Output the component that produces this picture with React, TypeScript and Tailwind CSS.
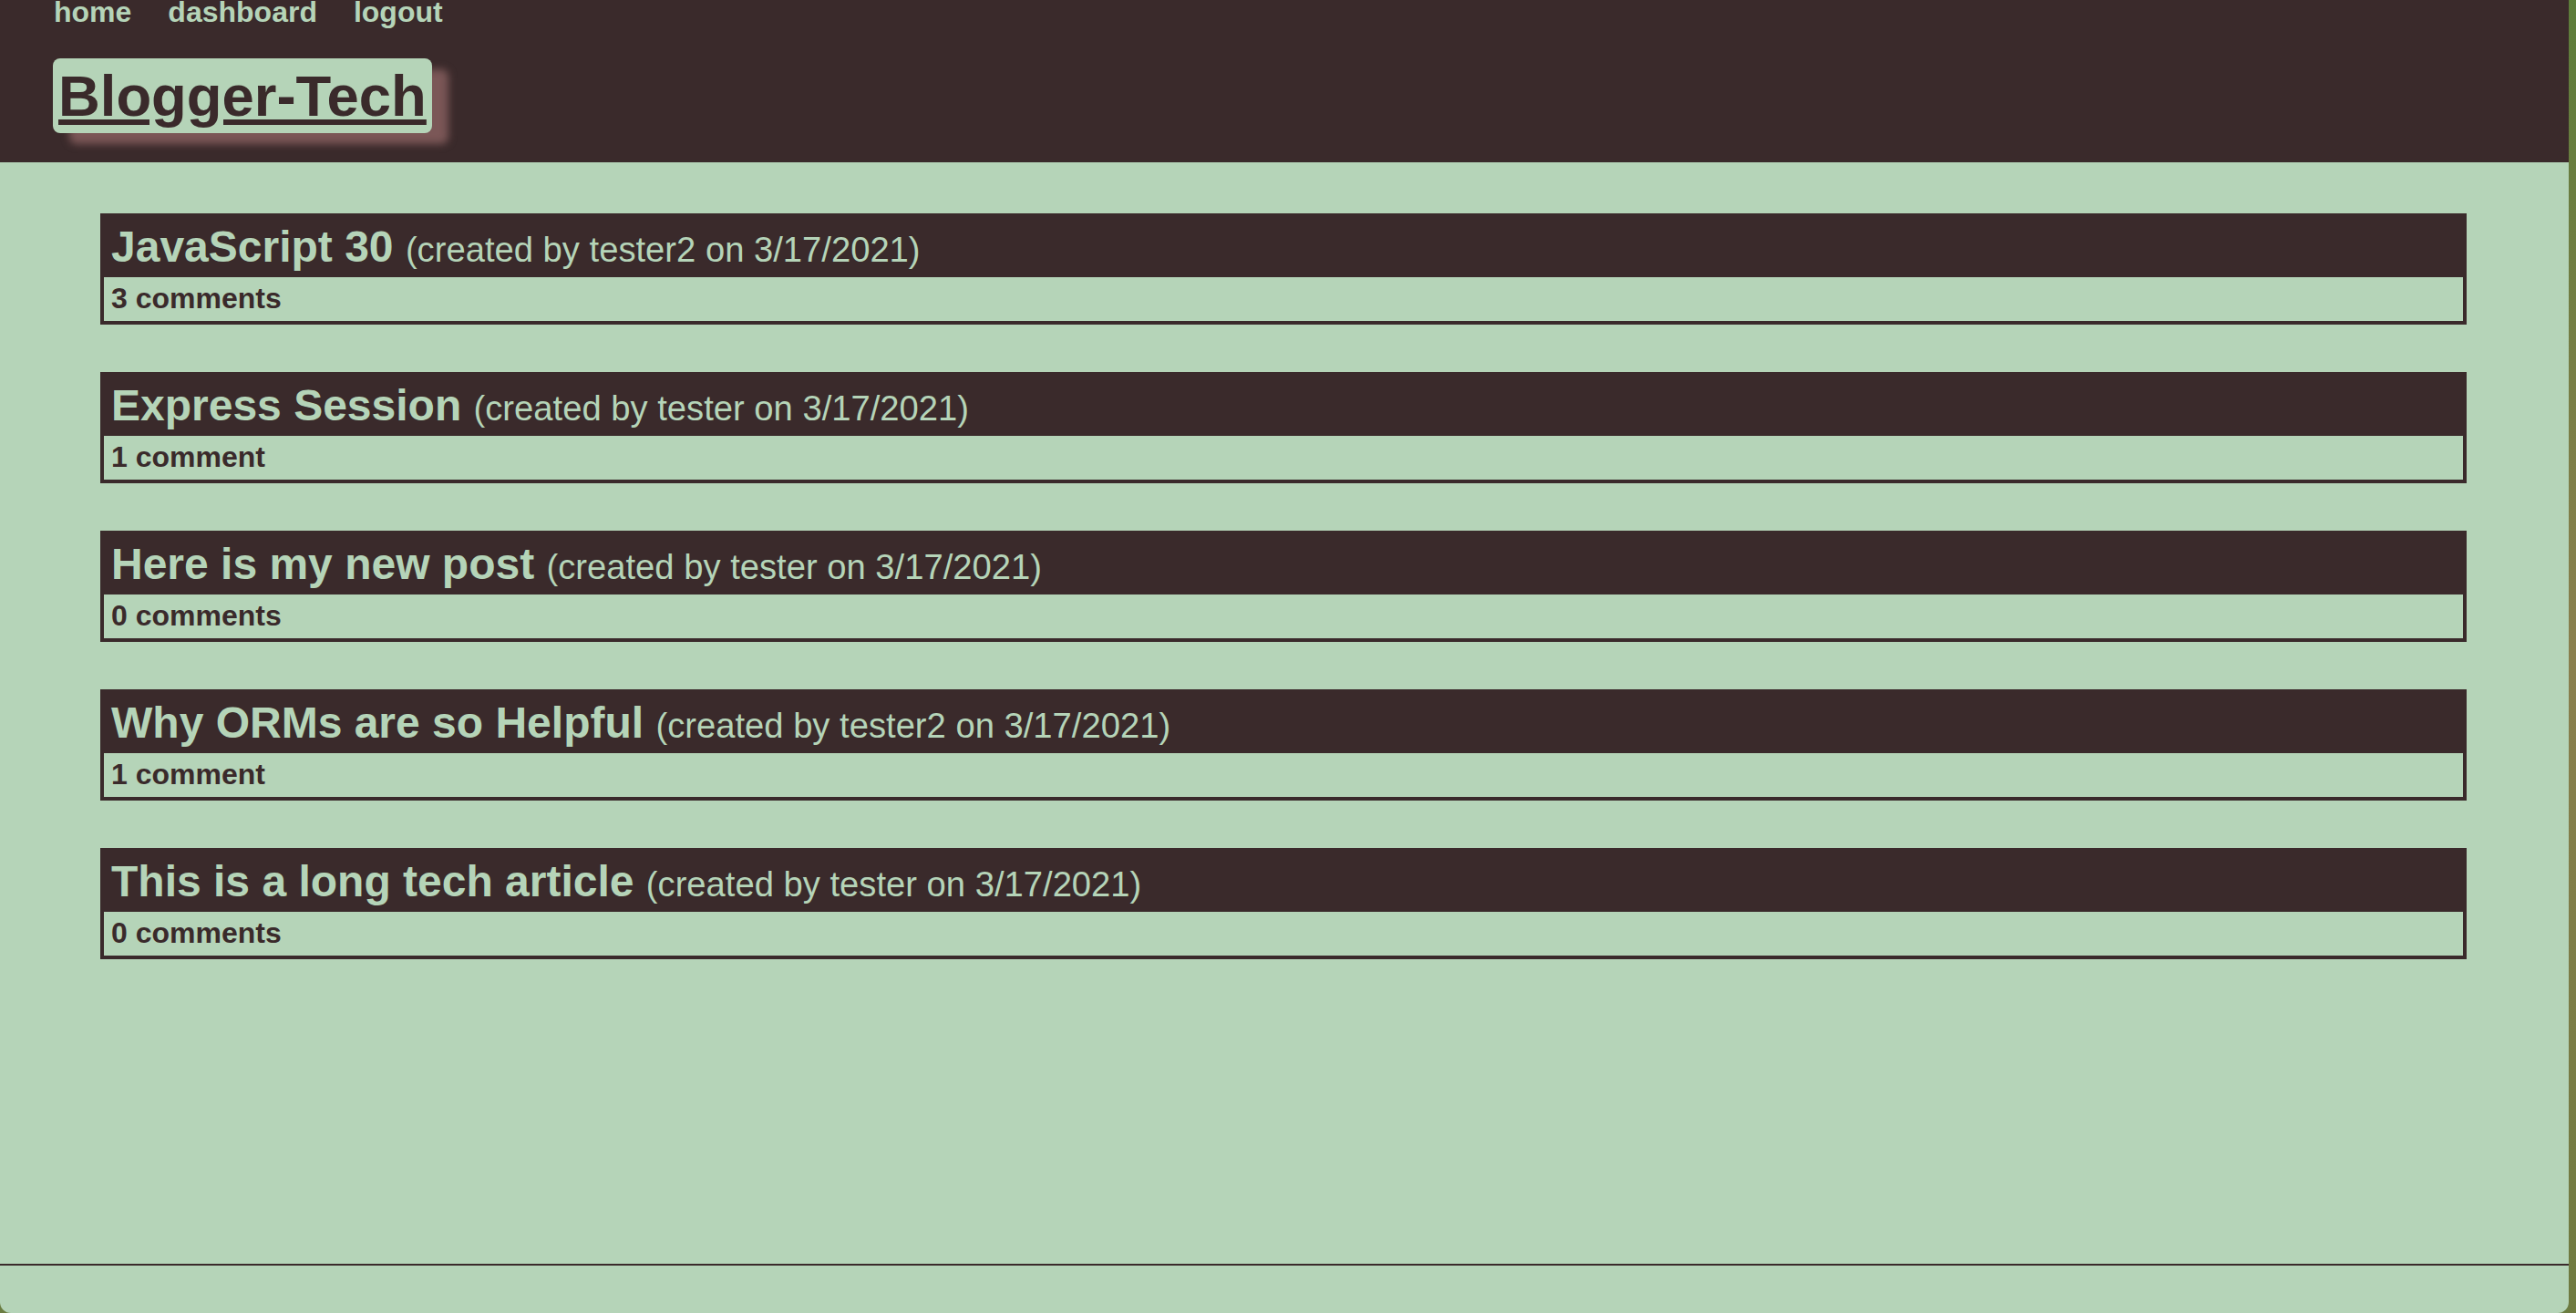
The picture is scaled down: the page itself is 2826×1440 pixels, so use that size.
import React from "react";

const posts = [
  { title: "JavaScript 30", user: "tester2", comments: "3 comments" },
  { title: "Express Session", user: "tester", comments: "1 comment" },
  { title: "Here is my new post", user: "tester", comments: "0 comments" },
  { title: "Why ORMs are so Helpful", user: "tester2", comments: "1 comment" },
  { title: "This is a long tech article", user: "tester", comments: "0 comments" },
];

export default function App() {
  return (
    <div
      className="w-[2826px] h-[1440px] flex overflow-hidden bg-[#6b7d42]"
      style={{ fontFamily: '"Liberation Sans", Arial, Helvetica, sans-serif' }}
    >
      <div className="w-[2818px] h-[1440px] shrink-0 bg-[#b5d4b8] rounded-b-[12px] flex flex-col overflow-hidden">
        <header className="h-[178px] shrink-0 bg-[#3a2a2b] pl-[58px]">
          <nav className="flex gap-[40px] -mt-[5px] text-[32px] font-bold text-[#b5d4b8] leading-[37px] pl-[1px]">
            <a>home</a>
            <a>dashboard</a>
            <a>logout</a>
          </nav>
          <h1 className="mt-[32px] inline-block bg-[#b5d4b8] text-[#3a2a2b] rounded-[8px] px-[6px] py-[5px] text-[63.4px] font-bold leading-[72px] underline shadow-[18px_12px_8px_#7b5757]">
            Blogger-Tech
          </h1>
        </header>
        <main className="flex-1 pt-[56px] pl-[110px] pr-[112px] flex flex-col gap-[52px]">
          {posts.map((p) => (
            <div key={p.title} className="border-4 border-[#3a2a2b] h-[122px]">
              <div className="h-[66px] bg-[#3a2a2b] text-[#b5d4b8] pl-[8px] pt-[5px] text-[48px] font-bold leading-[55px] whitespace-nowrap">
                {p.title}{" "}
                <span className="text-[38.2px] font-normal">(created by {p.user} on 3/17/2021)</span>
              </div>
              <div className="h-[48px] pl-[8px] pt-[5px] text-[32px] font-bold leading-[37px] text-[#3a2a2b]">
                {p.comments}
              </div>
            </div>
          ))}
        </main>
        <footer className="h-[54px] shrink-0 border-t-2 border-[#3a2a2b]" />
      </div>
      <div className="w-[8px] h-[1440px] bg-gradient-to-b from-[#5c7c3a] via-[#8a7f4e] to-[#6e7a40]" />
    </div>
  );
}
